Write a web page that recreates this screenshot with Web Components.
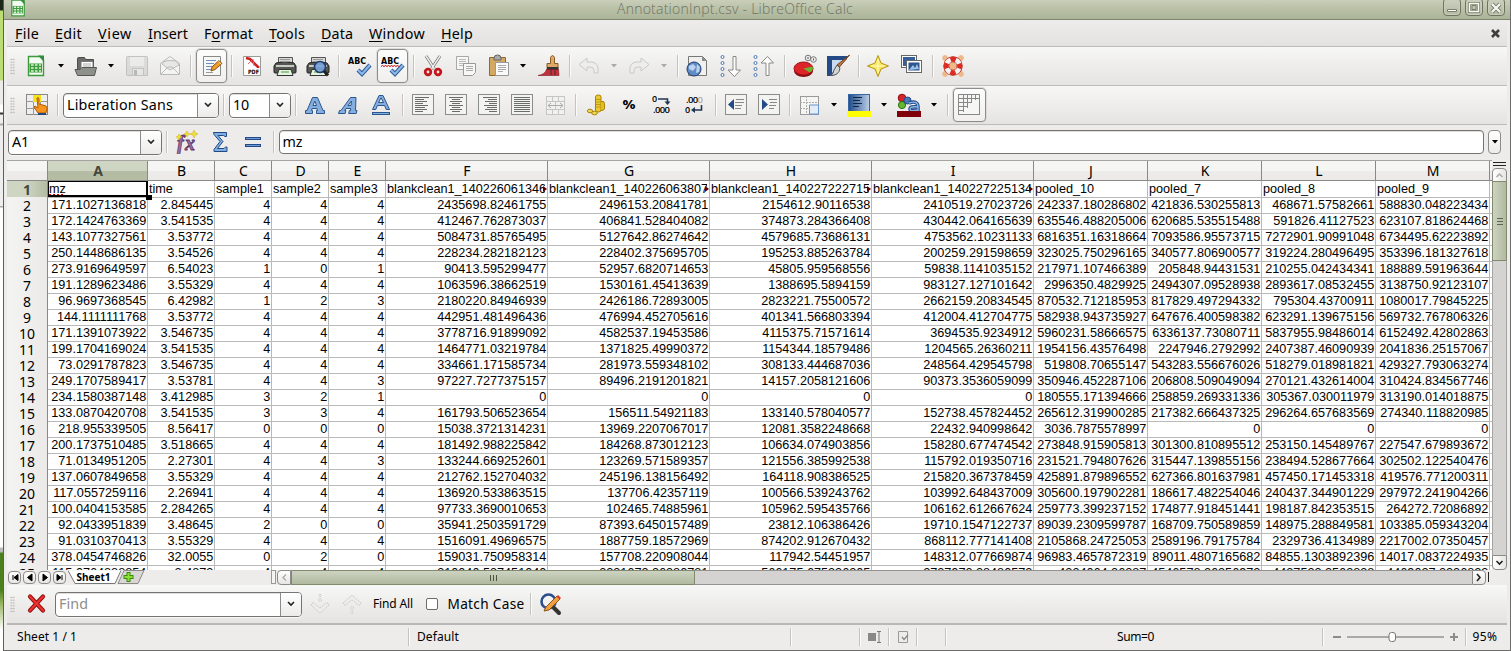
<!DOCTYPE html>
<html lang="en"><head><meta charset="utf-8"><title>AnnotationInpt.csv - LibreOffice Calc</title>
<style>
html,body{margin:0;height:651px;overflow:hidden}
body{font-family:"Noto Sans","Open Sans",sans-serif;color:#000;background:#edecea}
</style></head><body><calc-app></calc-app>
<script>
const define=(name,html,init)=>customElements.define(name,class extends HTMLElement{
  constructor(){super();this.attachShadow({mode:'open'});}
  connectedCallback(){
    const t=document.createElement('template');
    t.innerHTML=typeof html==='function'?html(this):html;
    this.shadowRoot.replaceChildren(t.content.cloneNode(true));
    if(init)init(this);
  }
});

/* Icon artwork, each on a 24 x 24 canvas */
const doc='stroke="#888a85" fill="#f7f7f5"';
const lines=(rows,c='#6b6d69')=>rows.map(([x,y,w])=>`<path d="M${x} ${y}.5h${w}" stroke="${c}"/>`).join('');
const alignBox=rows=>`<rect x="1.500" y="1.500" width="21" height="20" stroke="#8b8d89" fill="#f3f4f2"/>`+lines(rows);
const printer=`<path d="M5.500 10V3.500h14V10" fill="#d8d8d8" stroke="#555"/><path d="M3 9q9-3 18 0l2 3v6q0 1-1 1H2q-1 0-1-1v-6z" fill="#555753" stroke="#222"/><path d="M3 12h18" stroke="#c9cbc7" stroke-width="2"/><path d="M7 5.500h10M7 7.500h10" stroke="#999"/><path d="M6 15.500h12l2 6H4z" fill="#e6f5e0" stroke="#333"/><path d="M8 18h8" stroke="#98c78b" stroke-width="2"/>`;
const check=`<path d="M10 16l4 4 8-9" stroke="#2b5c99" stroke-width="4.200"/><path d="M10 16l4 4 8-9" stroke="#8db8e8" stroke-width="2.200"/>`;
const abc=`<text x="0" y="10" font-family="DejaVu Sans" font-weight="700" font-size="8.500" textLength="18" lengthAdjust="spacingAndGlyphs" fill="#000">ABC</text>`;
const ring=(y)=>`<circle cx="3.500" cy="${y}" r="1.500" fill="#fff" stroke="#4a74b0"/>`;
const arrowDown=`<path d="M14 2.500h3V16h4.500l-6 6.500L9 16h5z" fill="#fff" stroke="#888"/>`;
const I={
calc:`<path d="M4.500 2.500h12l3 3.500v15.500h-15z" fill="#f4fbf2" stroke="#3c9a3c" stroke-width="1.400"/><path d="M14 1.500h6V8z" fill="#2f8f3a"/><rect x="5.500" y="9.500" width="12.500" height="9" fill="#3f9b3f"/><path d="M7 11h2.700M11 11h2.500M15 11h2M7 14h2.700M11 14h2.500M15 14h2M7 17h2.700M11 17h2.500M15 17h2" stroke="#dff3d8" stroke-width="1.700"/>`,
open:`<path d="M3.500 19V4.500q0-1 1-1h6l1 2h8V19z" fill="#6b6d69" stroke="#4b4d49"/><path d="M7 7.500h12v9H7z" fill="#fff" stroke="#777"/><path d="M9 10h8M9 12h8" stroke="#aaa"/><path d="M1 15.500h5l2-2h14.500l-2 8h-17z" fill="#8e908c" stroke="#555753"/>`,
save:`<g opacity=".6"><path d="M2.500 2.500h19q1 0 1 1v18h-20q-1 0-1-1v-17q0-1 1-1z" fill="#cfcfcf" stroke="#a5a5a5"/><rect x="5" y="3" width="14" height="9" fill="#e9e9e9"/><rect x="7.500" y="14.500" width="11" height="7" fill="#e4e4e4" stroke="#aaa"/><rect x="9" y="16" width="3" height="5" fill="#999"/></g>`,
mail:`<path d="M2.500 9.500L12 2.500l9.500 7v11h-19z" fill="#f4f4f3" stroke="#b9b9b7"/><path d="M4 10q2-5 14-3l3 4-9 5z" fill="#e7e7e5" stroke="#bbb"/><path d="M3 20l7-7h4l7 7" stroke="#bbb"/>`,
edit:`<path d="M3.500 2.500h17v19h-17z" ${doc}/><path d="M6 6.500h10M6 9.500h8M6 12.500h6M6 15.500h5" stroke="#6f8fbf"/><path d="M6 18.500h7" stroke="#999"/><path d="M11 17l1-4 7-6.500 3 3-7 6z" fill="#f39b2d" stroke="#8a5410"/><path d="M18.500 7.500l3 3" stroke="#fbd59b"/>`,
pdf:`<path d="M3.500 2.500h17v19h-17z" fill="#fff" stroke="#999b97"/><path d="M6 4l4 1 9 9" stroke="#c22" stroke-width="2.500"/><path d="M8 10l5-5 1 7" stroke="#d67"/><rect x="7" y="14" width="13" height="7" fill="#fff"/><text x="8" y="20" font-family="DejaVu Sans" font-weight="700" font-size="6" textLength="11" lengthAdjust="spacingAndGlyphs" fill="#000">PDF</text>`,
print:printer,
preview:printer+`<circle cx="14" cy="13" r="5.500" fill="#7aa5d8" fill-opacity=".9" stroke="#1f3f70" stroke-width="1.600"/><path d="M18 17l4 4.500" stroke="#222" stroke-width="3"/>`,
abc:abc+check,
abcw:abc+`<path d="M0 12.500l1.500-1 1.500 1 1.500-1 1.500 1 1.500-1 1.500 1 1.500-1 1.500 1 1.500-1 1.500 1 1.500-1 1.500 1" stroke="#c00"/>`+check,
cut:`<path d="M5 2l8.500 13M19 2l-8.500 13" stroke="#777" stroke-width="3"/><path d="M5 2l8.500 13M19 2l-8.500 13" stroke="#eee" stroke-width="1.400"/><circle cx="7" cy="18" r="2.800" stroke="#c3151b" stroke-width="2.800"/><circle cx="17" cy="18" r="2.800" stroke="#c3151b" stroke-width="2.800"/>`,
copy:`<path d="M2.500 2.500h12v13h-12z" ${doc} stroke-opacity=".7"/><path d="M5 5.500h7M5 7.500h7M5 9.500h7M5 11.500h5" stroke="#bbb"/><path d="M9.500 9.500h12v9l-3 3h-9z" fill="#f7f7f5" stroke="#999"/><path d="M12 12.500h7M12 14.500h7M12 16.500h7" stroke="#aaa"/>`,
paste:`<path d="M2.500 3.500h16v18h-16z" fill="#d3a860" stroke="#916a28"/><path d="M7 4q0-3 3.500-3T14 4v2H7z" fill="#aaa" stroke="#666"/><path d="M8.500 8.500h13v13h-13z" fill="#fafafa" stroke="#999"/><path d="M11 11.500h8M11 13.500h8M11 15.500h8M11 17.500h5" stroke="#aaa"/>`,
brush:`<path d="M13.500 3.500q2-4 4 0v6h3.500v4H10v-4h3.500z" fill="#dca968" stroke="#8b5a22"/><path d="M10 13h11.500v3H9.500z" fill="#333"/><path d="M9.500 15.500h12l.5 6H1q7-1 8.500-6z" fill="#c7303a" stroke="#7c1520" stroke-width=".6"/><path d="M14 16v5M18 16v5" stroke="#333"/>`,
undo:`<path d="M10 4v4h5q6 1 6 7v4h-4v-3q0-3-4-3h-3v4L2 10.500z" fill="#ededeb" stroke="#c9c9c7"/>`,
redo:`<path d="M14 4v4H9q-6 1-6 7v4h4v-3q0-3 4-3h3v4l8-6.500z" fill="#ededeb" stroke="#c9c9c7"/>`,
web:`<path d="M3.500 2.500h14l4 4v15h-18z" fill="#f0f0ee" stroke="#777"/><path d="M17 2.500l4.500 4.500H17z" fill="#888"/><circle cx="9" cy="15" r="7" fill="#5f8cc4" stroke="#1d3c70"/><path d="M4 12l4-2 3 3-3 4-4-2M12 10l3 3-1 5-3 1" fill="#bdd2ec"/>`,
sortd:ring(3)+ring(9)+ring(15)+ring(21)+arrowDown,
sortu:ring(3)+ring(9)+ring(15)+ring(21)+`<path d="M14 21.500h3V9h4.500L15.500 2.500 9 9h5z" fill="#fff" stroke="#888"/>`,
chart:`<ellipse cx="10.500" cy="17" rx="9.500" ry="6" fill="#8c0b12"/><ellipse cx="10.500" cy="14.500" rx="9.500" ry="6.500" fill="#dc2429" stroke="#a01015"/><path d="M10.500 14.500l9-2q1.500 4-3 6z" fill="#6ab52f"/><circle cx="15" cy="4" r="2.800" fill="#eee" stroke="#777"/><circle cx="20.500" cy="5.500" r="2.800" fill="#eee" stroke="#777"/><path d="M15 3v2M20.500 4.500v2" stroke="#555"/>`,
draw:`<path d="M1 2h20v3L7 18v4H1z" fill="#234a86"/><path d="M6 6h14L6 19z" fill="#c9dbf0"/><path d="M23.500 1L13.500 13l-2.500-2z" fill="#bc7b48" stroke="#75401a"/><path d="M11 11l3 3q-1 8-10 7.500 4-1.500 4-5.500z" fill="#d6d6d6" stroke="#555"/>`,
star:`<path d="M12 1.500l3 7.500 7.500 3-7.500 3-3 7.500-3-7.500-7.500-3 7.500-3z" fill="#fbe75d" stroke="#b59412"/><path d="M12 5v14M5 12h14" stroke="#fffbd0"/>`,
gallery:`<rect x="1.500" y="1.500" width="15" height="12" fill="#fff" stroke="#666"/><rect x="3" y="3" width="12" height="9" fill="#335f9b"/><rect x="6.500" y="6.500" width="15" height="12" fill="#fff" stroke="#666"/><rect x="8.500" y="8.500" width="11" height="8" fill="#2d558e"/><path d="M9 16l4-5 2 3 2-4 2 5" fill="#9fc1e8"/>`,
help:`<path d="M4 4l16 16M20 4L4 20" stroke="#edb98a" stroke-width="5.500" stroke-linecap="round"/><circle cx="12" cy="12" r="6.700" stroke="#b0201c" stroke-width="6"/><circle cx="12" cy="12" r="6.700" stroke="#f3f3f3" stroke-width="4.800"/><circle cx="12" cy="12" r="6.700" stroke="#db2b22" stroke-width="5" stroke-dasharray="5.262 5.262" stroke-dashoffset="2.631"/>`,
cells:`<rect x="1.500" y="1.500" width="21" height="20" fill="#eee" stroke="#888"/><path d="M8.500 2v20M15.500 2v20M1 8.500h21M1 15.500h21" stroke="#999"/><rect x="8" y="2" width="8" height="7" fill="#f6e21a"/><path d="M12 5q2-1 2 1v5l7 2q1 0 1 3l-1 4h-8l-4-6 1-1 3 2z" fill="#f7941d" stroke="#b45d06"/><path d="M13 20h8v2h-8z" fill="#234a86"/>`,
bold:`<path d="M2.500 20.500v-3h1.500L9.500 4.500h5L20 17.500h1.500v3h-8v-3h1l-.6-2h-4.800l-.6 2h1v3zM10 12.500h3.500L11.800 8z" fill="#84aede" stroke="#2c568f"/>`,
italic:`<path d="M1.500 20.500l1-3H4L13.500 4.500h5.500l-.5 13H20l-.8 3h-7.500l.7-3h1.200v-2H9l-1.300 2h1.200l-.7 3zM11 12.500h3L14.500 8z" fill="#84aede" stroke="#2c568f"/>`,
under:`<path d="M3.500 16.500L10 2.500h4l6.500 14h-3.300l-1.600-4H8.400l-1.600 4zM9.500 9.500h5L12 4.800z" fill="#84aede" stroke="#2c568f"/><rect x="3.500" y="19.500" width="17" height="2" fill="#84aede" stroke="#2c568f"/>`,
left:alignBox([[4,4,14],[4,6,9],[4,8,12],[4,10,8],[4,12,13],[4,14,10],[4,16,12],[4,18,8]]),
center:alignBox([[5,4,14],[8,6,8],[6,8,12],[8,10,8],[5,12,14],[8,14,8],[6,16,12],[8,18,8]]),
right:alignBox([[6,4,14],[11,6,9],[8,8,12],[12,10,8],[7,12,13],[10,14,10],[8,16,12],[12,18,8]]),
just:alignBox([[4,4,16],[4,6,16],[4,8,16],[4,10,16],[4,12,16],[4,14,16],[4,16,16],[4,18,16]]),
merge:`<rect x="3.500" y="3.500" width="18" height="18" fill="#f1f1ef" stroke="#c6c6c4"/><path d="M3 8.500h18M3 16.500h18M9.500 3v5M15.500 3v5M9.500 17v4M15.500 17v4M12.500 8v8" stroke="#c6c6c4"/><path d="M5 12.500h15M8 10l-3 2.500 3 2.500M17 10l3 2.500-3 2.500" stroke="#aaa"/>`,
money:`<path d="M10.500 4q0-2 2.800-2T16 4v13q0 2-2.700 2t-2.800-2z" fill="#ecc92f" stroke="#a98208"/><path d="M11 6.500h5M11 9h5M11 11.500h5M11 14h5" stroke="#c09a12"/><path d="M16 8.500q3.500-1 3.500 2v5q0 2-3.500 2" fill="#e4bd20" stroke="#a98208"/><ellipse cx="5" cy="18" rx="2.600" ry="1.800" fill="#f2d850" stroke="#a98208"/><ellipse cx="9.500" cy="20" rx="2.800" ry="1.800" fill="#f2d850" stroke="#a98208"/>`,
pct:`<text x="12" y="16" text-anchor="middle" font-family="Open Sans" font-weight="700" font-size="12.500" textLength="13" lengthAdjust="spacingAndGlyphs" fill="#000">%</text>`,
addd:`<text x="3" y="9" font-family="Open Sans" font-size="9" font-weight="600" fill="#000">0</text><path d="M9 6h9.500v3" stroke="#1f3552" stroke-width="1.600"/><path d="M15.500 8.500h6l-3 3.500z" fill="#1f3552"/><text x="4" y="20" font-family="Open Sans" font-weight="600" font-size="9.500" textLength="17" fill="#000">.000</text>`,
deld:`<text x="4" y="10" font-family="Open Sans" font-weight="600" font-size="9.500" textLength="17" fill="#000">.00<tspan fill="#aaa">0</tspan></text><text x="3" y="20" font-family="Open Sans" font-size="9" font-weight="600" fill="#000">0</text><path d="M12 17h7.500v-5" stroke="#1f3552" stroke-width="1.600"/><path d="M13 14v6l-4-3z" fill="#1f3552"/>`,
ind1:`<rect x="1.500" y="1.500" width="21" height="20" stroke="#8b8d89" fill="#f3f4f2"/><path d="M10 6v11l-6-5.500z" fill="#234a86"/>`+lines([[12,6,8],[11,9,9],[11,12,7],[11,15,6]],'#888'),
ind2:`<rect x="1.500" y="1.500" width="21" height="20" stroke="#8b8d89" fill="#f3f4f2"/><path d="M5 6v11l6-5.500z" fill="#234a86"/>`+lines([[12,6,8],[13,9,7],[12,12,7],[12,15,5]],'#888'),
border:`<rect x="3.500" y="3.500" width="18" height="18" fill="#f5f5f3" stroke="#999"/><path d="M3 9.500h18M9.500 3v18M3 15.500h8" stroke="#aaa" stroke-dasharray="2 1"/><path d="M12.500 21v-9h9v9z" stroke="#6795cf" fill="#e4ecf6"/>`,
bg:`<linearGradient id="g"><stop stop-color="#204a87"/><stop offset="1" stop-color="#bcd0e8"/></linearGradient><rect x="1.500" y="1.500" width="21" height="17" fill="url(#g)" stroke="#3465a4"/><path d="M6 4.500h9M6 7.500h7M6 10.500h9M6 13.500h6" stroke="#0f2648"/><rect x="0" y="18" width="24" height="6" fill="#ff0"/>`,
fc:`<circle cx="5" cy="5" r="3.800" fill="#d8232a" stroke="#8b0e12"/><circle cx="5" cy="12" r="3.600" fill="#63b832" stroke="#2c7010"/><circle cx="10.500" cy="7.500" r="3.500" fill="#4b79b8" stroke="#204a87"/><path d="M12 10q9-3 9 4v4M21 14q-8-1-8 2t8 1" stroke="#204a87" stroke-width="3.500"/><path d="M12 10q9-3 9 4v4M21 14q-8-1-8 2t8 1" stroke="#8db4e4" stroke-width="1.400"/><rect x="0" y="18" width="24" height="6" fill="#80000a"/>`,
grid:`<rect x="1.500" y="1.500" width="21" height="20" fill="#f6f6f4" stroke="#888"/><path d="M2 5.500h20M2 9.500h13M2 13.500h9M2 17.500h5M6.500 2v17M10.500 2v13M14.500 2v8M18.500 2v5" stroke="#888"/>`,
fx:`<text x="2" y="19.500" font-family="Liberation Serif" font-style="italic" font-weight="700" font-size="20" textLength="18" fill="#a66f9d" stroke="#5c3566" stroke-width=".8">fx</text><path d="M12 1l1 2 2 1-2 1-1 2-1-2-2-1 2-1zM19 0l1.200 2.800L23 4l-2.800 1.200L19 8l-1.200-2.800L15 4l2.800-1.200zM4 4l1 2 2 1-2 1-1 2-1-2-2-1 2-1z" fill="#f2df3a" stroke="#c8ae16" stroke-width=".5"/>`,
sum:`<path d="M5.500 2.500h13v4h-1.500l-1.500-1H10l5 6-5.500 7h6.500l1.500-1.500h1.500v4.500h-13v-2l6-8-6-7z" fill="#82aede" stroke="#204a87"/>`,
eq:`<rect x="4.500" y="7.500" width="15" height="2" fill="#6d9bd6" stroke="#234a86"/><rect x="4.500" y="14.500" width="15" height="2" fill="#6d9bd6" stroke="#234a86"/>`,
cross:`<path d="M5 4.500l13 14M18 4.500L5 18.500" stroke="#8d0c0c" stroke-width="4.200" stroke-linecap="round"/><path d="M5 4.500l13 14M18 4.500L5 18.500" stroke="#ec2f2f" stroke-width="2.400" stroke-linecap="round"/>`,
fdown:`<path d="M12 2l1.500 1.500L12 5l-1.500-1.500zM12 6l2 2-2 2-2-2zM4 11h2l6 5 6-5h2l1 2-9 8-9-8z" fill="#ececea" stroke="#cacac8" stroke-dasharray="2 1"/>`,
fup:`<path d="M12 22l1.500-1.500L12 19l-1.500 1.500zM12 18l2-2-2-2-2 2zM4 13h2l6-5 6 5h2l1-2-9-8-9 8z" fill="#ececea" stroke="#cacac8" stroke-dasharray="2 1"/>`,
fr:`<circle cx="9.500" cy="9.500" r="7" fill="#f2f2f2" stroke="#2b4f8e" stroke-width="2.600"/><path d="M15 16l5 5" stroke="#333" stroke-width="4" stroke-linecap="round"/><path d="M5 19l2-4L18 4l3 3L10 18z" fill="#f0a040" stroke="#8a5410"/><path d="M17.500 4.500L19 3l3 3-1.500 1.500z" fill="#d33"/>`
};

define('ui-icon',el=>`<style>:host{display:block;flex:none;width:24px;height:24px}svg{display:block;width:100%;height:100%}</style><svg viewBox="0 0 24 24" fill="none">${I[el.getAttribute('name')]}</svg>`);

/* Text set to a fixed run width through letter spacing */
define('fit-text',`<style>:host{display:block;flex:none;white-space:pre}span{display:inline-block}</style><span><slot></slot></span>`,el=>{
  const s=el.shadowRoot.querySelector('span'),w=+el.getAttribute('w'),n=el.textContent.length;
  s.style.letterSpacing=((w-s.getBoundingClientRect().width)/n)+'px';
  el.style.width=w+'px';
});

define('title-bar',`<style>
:host{display:flex;height:19px;border-bottom:1px solid #7e8570;background:linear-gradient(#c9ceb9,#bac1a8 45%,#abb497);position:relative;align-items:flex-start;color:#6d7265}
ui-icon{width:20px;height:20px;margin:-2px 0 0 4px}
fit-text{margin:-1px 0 0 589px;font-size:14px;line-height:20px;font-weight:300;font-family:"Open Sans"}
.b{display:flex;gap:4px;margin-left:auto;margin-right:5px}
i{width:16px;height:16px;margin-top:-2px;border:1px solid #6c7460;border-radius:4px;background:linear-gradient(#ccd1bf,#b4bba3);box-shadow:inset 0 0 0 1px #c9cfbb}
svg{display:block}
</style><ui-icon name="calc"></ui-icon><fit-text w="236">AnnotationInpt.csv - LibreOffice Calc</fit-text>
<div class="b"><i><svg width="16" height="16"><path d="M3.500 10.500h9v2h-9z" fill="#fff" stroke="#78806a"/></svg></i>
<i><svg width="16" height="16" fill="none"><path d="M3.500 4.500h9v8h-9z" stroke="#78806a" stroke-width="3"/><path d="M3.500 4.500h9v8h-9z" stroke="#f7f8f2" stroke-width="1.500"/><path d="M6 6.500h4v4H6z" stroke="#78806a"/></svg></i>
<i><svg width="16" height="16" fill="none"><path d="M4 5l8 8M12 5l-8 8" stroke="#78806a" stroke-width="4"/><path d="M4 5l8 8M12 5l-8 8" stroke="#f7f8f2" stroke-width="2.200"/></svg></i></div>`);

define('menu-bar',()=>`<style>
:host{display:flex;box-sizing:border-box;height:27px;margin:0 3px;border-bottom:1px solid #bdbcba;background:linear-gradient(#edecea,#e3e2e0);align-items:center;padding:2px 0 0 8px;gap:16px;font-size:14.300px}
fit-text{line-height:20px}u{text-underline-offset:2px}svg{margin:-2px 7.500px 0 auto}
</style>${[['<u>F</u>ile',24],['<u>E</u>dit',27],['<u>V</u>iew',34],['<u>I</u>nsert',40],['F<u>o</u>rmat',49],['<u>T</u>ools',36],['<u>D</u>ata',32],['<u>W</u>indow',56],['<u>H</u>elp',32]].map(([t,w])=>`<fit-text w="${w}">${t}</fit-text>`).join('')}
<svg width="9" height="9"><path d="M1 1l7 7M8 1L1 8" stroke="#3d3d3d" stroke-width="2.600"/></svg>`);

define('drop-arrow',`<style>:host{display:block;flex:none;width:6px;height:3px;margin-top:-2px}svg{display:block}</style><svg width="6" height="4"><path d="M0 0h6L3 3.500z" fill="currentColor"/></svg>`);
define('tool-sep',`<style>:host{display:block;box-sizing:border-box;flex:none;height:22px;background:#c4c3c1;border-right:1px solid #fbfbfa}</style>`);
define('tool-grip',`<style>:host{display:block;flex:none;width:5px;height:17px;background:radial-gradient(circle,#b5b4b2 0.700px,transparent 1px) 0 0/2.500px 2.800px}</style>`);
define('tool-toggle',`<style>:host{display:flex;flex:none;box-sizing:border-box;width:32px;height:34px;border:1px solid #8d8c8a;border-radius:4px;background:linear-gradient(#fdfdfd,#f0efee);align-items:center;justify-content:center;box-shadow:0 0 0 1px #dddcda}</style><slot></slot>`);
define('combo-box',`<style>
:host{display:flex;flex:none;box-sizing:border-box;height:25px;border:1px solid #767472;border-radius:4px;background:#fff;box-shadow:inset 0 1px 0 #ddd,0 1px 0 #f8f8f8;overflow:hidden;align-items:center;font-size:14.300px}
div{flex:1;padding-left:var(--pad,3px);line-height:22px}
i{display:flex;box-sizing:border-box;width:21px;height:100%;border-left:1px solid #8d8b89;background:linear-gradient(#fff,#ecebea);align-items:center;justify-content:center}
</style><div><slot></slot></div><i><svg width="8" height="6" fill="none"><path d="M1 1l3 3 3-3" stroke="#222" stroke-width="1.600"/></svg></i>`);

/* A row of tools: each entry is [centre, width, markup]; gaps come from the centres */
const row=(start,items)=>{let x=start;return items.map(([c,w,html])=>{const l=c-w/2,m=l-x;x=l+w;return html.replace(/^<([\w-]+)/,`<$1 style="margin-left:${m}px;width:${w}px"`);}).join('');};
const ic=(c,n)=>[c,24,`<ui-icon name="${n}"></ui-icon>`];
const sp=c=>[c,2,'<tool-sep></tool-sep>'];
const ar=(c,g)=>[c,6,`<drop-arrow ${g?'class="off"':''}></drop-arrow>`];
const tg=(c,n,w=31)=>[c,w,`<tool-toggle><ui-icon name="${n}"></ui-icon></tool-toggle>`];
const gr=[12.500,5,'<tool-grip></tool-grip>'];
const barCss=`<style>:host{display:flex;align-items:center;height:38px;margin:0 3px;border-bottom:1px solid #bdbcba;background:linear-gradient(#f7f7f5,#ecebe9 60%,#e5e4e2)}.off{color:#aaa}</style>`;

define('standard-bar',()=>barCss+row(7,[gr,ic(36,'calc'),ar(61),ic(86,'open'),ar(111),ic(137,'save'),ic(170,'mail'),sp(191),tg(211.500,'edit'),sp(232),ic(252,'pdf'),ic(285,'print'),ic(318,'preview'),sp(339),ic(360,'abc'),tg(392.500,'abcw'),sp(414),ic(433,'cut'),ic(466,'copy'),ic(499,'paste'),ar(523),ic(549,'brush'),sp(570),ic(589,'undo'),ar(614,1),ic(639,'redo'),ar(664,1),sp(678),ic(697,'web'),ic(731,'sortd'),ic(764,'sortu'),sp(785),ic(805,'chart'),ic(838,'draw'),sp(859),ic(878,'star'),ic(912,'gallery'),sp(933),ic(953,'help')]));

define('format-bar',()=>barCss+row(7,[gr,ic(37,'cells'),sp(58),[141,156,'<combo-box><fit-text w="106">Liberation Sans</fit-text></combo-box>'],sp(224),[260,62,'<combo-box><fit-text w="16">10</fit-text></combo-box>'],sp(296),ic(315,'bold'),ic(349,'italic'),ic(381,'under'),sp(403),ic(423,'left'),ic(456,'center'),ic(489,'right'),ic(522,'just'),ic(555,'merge'),sp(576),ic(597,'money'),ic(628.500,'pct'),ic(661,'addd'),ic(694,'deld'),sp(716),ic(736,'ind1'),ic(769,'ind2'),sp(790),ic(809,'border'),ar(834),ic(859,'bg'),ar(884),ic(909,'fc'),ar(934),sp(948),tg(969,'grid',33)]));

define('formula-bar',()=>`<style>:host{display:flex;align-items:center;height:34px;padding-bottom:1px;margin:0 3px;background:#edecea;font-size:14.300px}
.in{box-sizing:border-box;height:24px;border:1px solid #767472;border-radius:4px;background:#fff;box-shadow:inset 0 1px 0 #ddd;padding-left:3px;line-height:22px}
.dd{box-sizing:border-box;height:24px;border:1px solid #8d8b89;border-radius:4px;background:linear-gradient(#fff,#ecebea);display:flex;align-items:center;justify-content:center}</style>`+
row(7,[[85,154,'<combo-box><fit-text w="17">A1</fit-text></combo-box>'],sp(167),ic(187,'fx'),ic(220,'sum'),ic(253,'eq'),sp(274),[881,1205,'<div class="in"><fit-text w="20">mz</fit-text></div>'],[1494.500,13,'<div class="dd"><drop-arrow></drop-arrow></div>']]));

const data=`mz|time|sample1|sample2|sample3|blankclean1_140226061346|blankclean1_140226063807|blankclean1_140227222715|blankclean1_140227225134|pooled_10|pooled_7|pooled_8|pooled_9
171.1027136818|2.845445|4|4|4|2435698.82461755|2496153.20841781|2154612.90116538|2410519.27023726|242337.180286802|421836.530255813|468671.57582661|588830.048223434
172.1424763369|3.541535|4|4|4|412467.762873037|406841.528404082|374873.284366408|430442.064165639|635546.488205006|620685.535515488|591826.41127523|623107.818624468
143.1077327561|3.53772|4|4|4|5084731.85765495|5127642.86274642|4579685.73686131|4753562.10231133|6816351.16318664|7093586.95573715|7272901.90991048|6734495.62223892
250.1448686135|3.54526|4|4|4|228234.282182123|228402.375695705|195253.885263784|200259.291598659|323025.750296165|340577.806900577|319224.280496495|353396.181327618
273.9169649597|6.54023|1|0|1|90413.595299477|52957.6820714653|45805.959568556|59838.1141035152|217971.107466389|205848.94431531|210255.042434341|188889.591963644
191.1289623486|3.55329|4|4|4|1063596.38662519|1530161.45413639|1388695.5894159|983127.127101642|2996350.4829925|2494307.09528938|2893617.08532455|3138750.92123107
96.9697368545|6.42982|1|2|3|2180220.84946939|2426186.72893005|2823221.75500572|2662159.20834545|870532.712185953|817829.497294332|795304.43700911|1080017.79845225
144.1111111768|3.53772|4|4|4|442951.481496436|476994.452705616|401341.566803394|412004.412704775|582938.943735927|647676.400598382|623291.139675156|569732.767806326
171.1391073922|3.546735|4|4|4|3778716.91899092|4582537.19453586|4115375.71571614|3694535.9234912|5960231.58666575|6336137.73080711|5837955.98486014|6152492.42802863
199.1704169024|3.541535|4|4|4|1464771.03219784|1371825.49990372|1154344.18579486|1204565.26360211|1954156.43576498|2247946.2792992|2407387.46090939|2041836.25157067
73.0291787823|3.546735|4|4|4|334661.171585734|281973.559348102|308133.444687036|248564.429545798|519808.70655147|543283.556676026|518279.018981821|429327.793063274
249.1707589417|3.53781|4|4|3|97227.7277375157|89496.2191201821|14157.2058121606|90373.3536059099|350946.452287106|206808.509049094|270121.432614004|310424.834567746
234.1580387148|3.412985|3|2|1|0|0|0|0|180555.171394666|258859.269331336|305367.030011979|313190.014018875
133.0870420708|3.541535|3|3|4|161793.506523654|156511.54921183|133140.578040577|152738.457824452|265612.319900285|217382.666437325|296264.657683569|274340.118820985
218.955339505|8.56417|0|0|0|15038.3721314231|13969.2207067017|12081.3582248668|22432.940998642|3036.7875578997|0|0|0
200.1737510485|3.518665|4|4|4|181492.988225842|184268.873012123|106634.074903856|158280.677474542|273848.915905813|301300.810895512|253150.145489767|227547.679893672
71.0134951205|2.27301|4|4|3|133244.669252601|123269.571589357|121556.385992538|115792.019350716|231521.794807626|315447.139855156|238494.528677664|302502.122540476
137.0607849658|3.55329|4|4|4|212762.152704032|245196.138156492|164118.908386525|215820.367378459|425891.879896552|627366.801637981|457450.171453318|419576.771200311
117.0557259116|2.26941|4|4|4|136920.533863515|137706.42357119|100566.539243762|103992.648437009|305600.197902281|186617.482254046|240437.344901229|297972.241904266
100.0404153585|2.284265|4|4|4|97733.3690010653|102465.74885961|105962.595435766|106162.612667624|259773.399237152|174877.918451441|198187.842353515|264272.72086892
92.0433951839|3.48645|2|0|0|35941.2503591729|87393.6450157489|23812.106386426|19710.1547122737|89039.2309599787|168709.750589859|148975.288849581|103385.059343204
91.0310370413|3.55329|4|4|4|1516091.49696575|1887759.18572969|874202.912670432|868112.777141408|2105868.24725053|2589196.79175784|2329736.4134989|2217002.07350457
378.0454746826|32.0055|0|2|0|159031.750958314|157708.220908044|117942.54451957|148312.077669874|96983.4657872319|89011.4807165682|84855.1303892396|14017.0837224935
115.0764888854|2.4873|4|4|4|310040.537451040|2231673.36280781|566175.675236205|2727072.28480572|4224064.26287|4546578.26256972|4427523.2562838|4469027.2236823`.split('\n').map(r=>r.split('|'));

define('calc-grid',()=>`<style>
:host{display:block;overflow:hidden;height:409px;width:1485px;background:#fff;border-top:1px solid #a5a4a2}
.r{display:grid;grid-template-columns:41px 100px 67px 57px 57px 57px 162px 162px 162px 162px 114px 114px 114px 114px 2px;height:16px}
.r>*{box-sizing:border-box;border-right:1px solid #b9b9b9;border-bottom:1px solid #b9b9b9;white-space:nowrap}
.r>:last-child{border-right:0}
.c{font:12.670px/16px "Liberation Sans",Arial,sans-serif;text-align:right;padding-right:.7px}
.t{text-align:left;padding-left:1px;position:relative}
.r>.h{font-size:14px;line-height:17px;text-align:center;border-color:#8a8987;background:linear-gradient(90deg,#f4f4f2,#ebeae8)}
.r>.h span{display:block;height:15px}
.top{height:20px}.top>.h{line-height:19px;background:linear-gradient(#f5f5f3 50%,#edecea 50%,#ebeae8);padding-left:1px}
.r>.sel{font-weight:700;color:#44483c;background:linear-gradient(#cfd5c3 50%,#b4bca4 50%)}
.side>.sel{background:linear-gradient(90deg,#cfd5c3 45%,#b4bca4)}
.a::before{content:"";position:absolute;left:0;top:0;width:97px;height:13px;border:solid #000;border-width:1px 2px 2px 1px}
.a::after{content:"";position:absolute;left:98px;top:14px;width:6px;height:5px;background:#000;z-index:2}
.o u{display:block;text-decoration:none;width:158px;overflow:hidden}
.o::after{content:"";position:absolute;right:0;top:5px;border:solid transparent;border-width:3px 0 3px 4px;border-left-color:#5a0000}
.w{text-decoration:underline dotted #e00 2px;text-underline-offset:1px}
</style><div class="r top"><div class="h"></div>${[...'ABCDEFGHIJKLM'].map(c=>`<div class="h ${c=='A'?'sel':''}">${c}</div>`).join('')}<div class="h"></div></div>`+
data.map((r,i)=>`<div class="r side"><div class="h ${i?'':'sel'}"><span>${i+1}</span></div>${r.map((v,j)=>i?`<div class="c">${v}</div>`:`<div class="c t ${j?'':'a'} ${v.length>12?'o':''}">${v.length>12?`<u>${v}</u>`:j?v:`<span class="w">${v}</span>`}</div>`).join('')}<div class="c"></div></div>`).join(''));

define('v-scroll',`<style>
:host{display:flex;flex-direction:column;width:15px;height:410px;margin-left:0;background:#edecea}
.s{height:2px;margin:2px 1px 2px;border:solid #222;border-width:1px 0}
.b{box-sizing:border-box;height:14px;border:1px solid #8b8a88;border-radius:4px 4px 0 0;background:linear-gradient(90deg,#fff,#e6e5e3);display:flex;align-items:center;justify-content:center}
.k{box-sizing:border-box;height:80px;margin-top:-1px;border:1px solid #7f8a6e;background:linear-gradient(90deg,#cdd3c0,#b1b99f);display:flex;flex-direction:column;align-items:center;justify-content:center;gap:2px}
.k i{width:6px;height:1px;background:#5d6450}
.tr{flex:1;background:#d4d3d1;border:solid #a4a3a1;border-width:0 1px}
.d{border-radius:0 0 4px 4px;height:15px}
svg{fill:none}
</style><div class="s"></div><div class="b"><svg width="9" height="6"><path d="M1.500 5l3-3 3 3" stroke="#aaa" stroke-width="1.500"/></svg></div><div class="k"><i></i><i></i><i></i></div><div class="tr"></div><div class="b d"><svg width="9" height="6"><path d="M1.500 1l3 3 3-3" stroke="#222" stroke-width="1.600"/></svg></div>`);

define('sheet-tabs',()=>`<style>
:host{display:flex;height:15px;margin:0 3px;background:#edecea;align-items:stretch}
.n{box-sizing:border-box;flex:none;width:13px;height:13px;margin:1px 2px 0 0;border:1px solid #8b8a88;border-radius:4px;background:linear-gradient(#fff,#e6e5e3)}
.n:first-of-type{margin-left:1px}
.n svg,.tab svg{display:block}
.tab{flex:none;width:76px;margin-left:0}
.sp{width:3px;flex:none;box-sizing:border-box;width:5px;border:1px solid #999;background:#f4f4f4;margin:0 1px 0 127px;height:14px}
.b{box-sizing:border-box;flex:none;width:14px;border:1px solid #8b8a88;background:linear-gradient(#fff,#e6e5e3);display:flex;align-items:center;justify-content:center}
.k{box-sizing:border-box;flex:none;width:404px;border:1px solid #7f8a6e;background:linear-gradient(#cdd3c0,#b1b99f);display:flex;align-items:center;justify-content:center;gap:2px}
.k i{width:1px;height:6px;background:#4d5440}
.tr{width:777px;flex:none;background:#d4d3d1;border:solid #94938f;border-width:1px 0;box-sizing:border-box}
.e{width:1px;height:10px;background:#222;margin:2px 0 0 2px}
</style>${['M4 3v5M9 2.500L5 5.500l4 3z','M8 2L3.500 5.500 8 9z','M4 2l4.500 3.500L4 9z','M8 3v5M3 2.500l4 3-4 3z'].map(d=>`<div class="n"><svg width="11" height="11"><path d="${d}" stroke="#000" stroke-width="1"/></svg></div>`).join('')}
<div class="tab"><svg width="78" height="15"><path d="M50 13.500L56 .5H76L70 13.500z" fill="#d8d7d5" stroke="#8b8a88"/><path d="M0 .5L7 13.500H47L53 .5z" fill="#fff"/><path d="M0 .5L7 13.500H47L53 .5" fill="none" stroke="#777"/><text x="8.500" y="11" font-family="Noto Sans" font-weight="700" font-size="10.500" textLength="34" lengthAdjust="spacingAndGlyphs">Sheet1</text><path d="M60.500 2v10M55.500 7h10" stroke="#3c8a0c" stroke-width="4"/><path d="M60.500 3v8M56.500 7h8" stroke="#8ae234" stroke-width="2"/></svg></div>
<div class="sp"></div><div class="b" style="border-radius:4px 0 0 4px"><svg width="6" height="9" fill="none"><path d="M5 1.500l-3 3 3 3" stroke="#aaa" stroke-width="1.400"/></svg></div><div class="k"><i></i><i></i><i></i></div><div class="tr"></div><div class="b" style="border-radius:0 4px 4px 0"><svg width="6" height="9" fill="none"><path d="M1 1l3 3.500-3 3.500" stroke="#222" stroke-width="1.600"/></svg></div><div class="e"></div>`);

define('find-bar',()=>barCss+`<style>:host{border-bottom:2px solid #b9b8b6}combo-box{color:#8e8d8b}.fa{font-size:12px;line-height:18px}.mc{font-size:13.600px;line-height:20px}.ck{box-sizing:border-box;height:12px;border:1px solid #6c6b69;border-radius:2px;background:#fff}</style>`+
row(7,[gr,ic(37,'cross'),[178.500,247,'<combo-box><fit-text w="29">Find</fit-text></combo-box>'],ic(320,'fdown'),ic(352,'fup'),[393,40,'<fit-text w="40" class="fa">Find All</fit-text>'],[432,12,'<div class="ck"></div>'],[486,77,'<fit-text w="77" class="mc">Match Case</fit-text>'],sp(531),ic(551,'fr')]));

define('status-bar',()=>`<style>:host{display:flex;align-items:center;height:24px;margin:0 3px;background:#edecea;font-size:12px}fit-text{line-height:18px}tool-sep{height:18px}svg{flex:none}</style>`+
row(7,[[47,60,'<fit-text w="60">Sheet 1 / 1</fit-text>'],sp(409),[438,42,'<fit-text w="42">Default</fit-text>'],sp(791),sp(860),[874,13,'<svg height="12"><path d="M0 2h8v8H0z" fill="#888"/><path d="M9 .5h4M11 1v10M9 11.500h4" stroke="#777"/></svg>'],sp(889),[903,11,'<svg height="13" fill="none"><path d="M.5.5h9v11h-9z" stroke="#999"/><path d="M4 6l2 2.500 4-4.500" stroke="#888" stroke-width="1.300"/></svg>'],sp(917),sp(946),[1135.500,37,'<fit-text w="37">Sum=0</fit-text>'],sp(1323),[1395.500,127,'<svg height="14" fill="none"><path d="M1 7h8M118 7h8M122 3v8" stroke="#8d8c8a" stroke-width="2"/><path d="M15 7h97" stroke="#aaa9a7" stroke-width="2"/><rect x="57" y="2.500" width="6.500" height="9" rx="2.500" fill="#fff" stroke="#777"/></svg>'],sp(1466),[1485,25,'<fit-text w="25">95%</fit-text>']]));

define('calc-window',`<style>
:host{display:flex;flex-direction:column;box-sizing:border-box;width:1507px;height:651px;background:#edecea;border-right:1px solid #6d6c6a;border-bottom:1px solid #6d6c6a;overflow:hidden}
.main{display:flex;margin:0 0 0 3px;height:410px}
</style><title-bar></title-bar><menu-bar></menu-bar><standard-bar></standard-bar><format-bar></format-bar><formula-bar></formula-bar>
<div class="main"><calc-grid></calc-grid><v-scroll></v-scroll></div><sheet-tabs></sheet-tabs><find-bar></find-bar><status-bar></status-bar>`);

define('calc-app',`<style>:host{display:flex;width:1511px;height:651px}
.desk{width:3px;border-right:1px solid #5f5e5c;background:linear-gradient(#1d2a18 0 10px,#bcdc74 11px 80px,#ecebea 81px 104px,#fff 105px 112px,#333 113px 114px,#eee 115px 123px,#aaa 124px 125px,#eee 126px 206px,#aaa 206px 207px,#fff 208px 547px,#bbb 548px 552px,#4c7f1e 553px 590px,#9dbb6a 605px,#fff 630px)}</style><div class="desk"></div><calc-window></calc-window>`);
</script></body></html>
